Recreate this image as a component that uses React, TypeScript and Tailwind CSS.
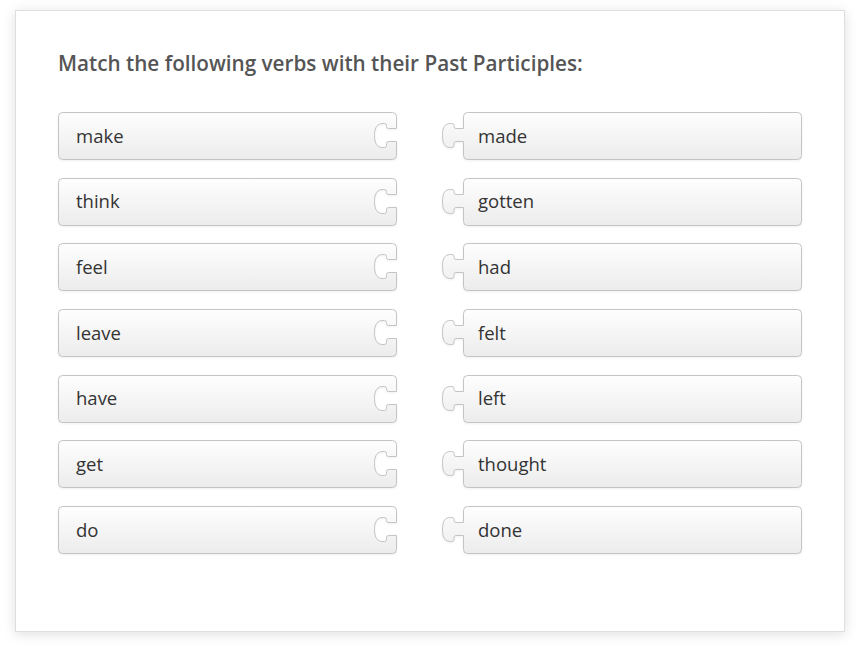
const left = ['make', 'think', 'feel', 'leave', 'have', 'get', 'do'];
const right = ['made', 'gotten', 'had', 'felt', 'left', 'thought', 'done'];

const socketPath =
  'M 4.5 0.5 H 334.5 Q 338.5 0.5 338.5 4.5 V 16.5 H 330.5 Q 328.5 16.5 328.5 14.5 V 13.5 Q 328.5 11.5 326.5 11.5 H 325 C 319.5 11.5 316.5 15 316.5 23.5 C 316.5 32 319.5 35.5 325 35.5 H 326.5 Q 328.5 35.5 328.5 33.5 V 31.5 Q 328.5 29.5 330.5 29.5 H 338.5 V 43.5 Q 338.5 47.5 334.5 47.5 H 4.5 Q 0.5 47.5 0.5 43.5 V 4.5 Q 0.5 0.5 4.5 0.5 Z';

const tabPath =
  'M 25.5 0.5 H 355.5 Q 359.5 0.5 359.5 4.5 V 43.5 Q 359.5 47.5 355.5 47.5 H 25.5 Q 21.5 47.5 21.5 43.5 V 29.5 H 14 Q 12 29.5 12 31.5 V 33.5 Q 12 35.5 10 35.5 H 8.5 C 3 35.5 0.5 32 0.5 23.5 C 0.5 15 3 11.5 8.5 11.5 H 10 Q 12 11.5 12 13.5 V 14.5 Q 12 16.5 14 16.5 H 21.5 V 4.5 Q 21.5 0.5 25.5 0.5 Z';

function Piece({ label, side }: { label: string; side: 'left' | 'right' }) {
  const w = side === 'left' ? 339 : 360;
  return (
    <div
      className={`relative h-[48px] flex items-center ${
        side === 'left' ? 'w-[339px] pl-[18px]' : 'w-[360px] pl-[36px]'
      }`}
    >
      <svg
        className="absolute inset-0 drop-shadow-[0_1px_1px_rgba(0,0,0,0.06)]"
        width={w}
        height={48}
        viewBox={`0 0 ${w} 48`}
      >
        <defs>
          <linearGradient id="tileFill" x1="0" y1="0" x2="0" y2="1">
            <stop offset="0" stopColor="#fefefe" />
            <stop offset="1" stopColor="#ececec" />
          </linearGradient>
        </defs>
        <path d={side === 'left' ? socketPath : tabPath} fill="url(#tileFill)" stroke="#c4c4c4" strokeWidth="1" />
      </svg>
      <span className="relative text-[18.5px] text-[#333] leading-none">{label}</span>
    </div>
  );
}

export default function App() {
  return (
    <div className="w-[861px] h-[653px] bg-white pt-[10px] pl-[15px]" style={{ fontFamily: '"Open Sans", sans-serif' }}>
      <div className="w-[830px] h-[622px] bg-white border border-[#dedede] shadow-[0_2px_12px_rgba(0,0,0,0.13)] pt-[38px] pl-[42px]">
        <h1 className="text-[20.7px] font-semibold text-[#555] leading-[28px]">
          Match the following verbs with their Past Participles:
        </h1>
        <div className="flex gap-[45px] mt-[35px]">
          <div className="flex flex-col gap-[17.67px]">
            {left.map((w) => (
              <Piece key={w} label={w} side="left" />
            ))}
          </div>
          <div className="flex flex-col gap-[17.67px]">
            {right.map((w) => (
              <Piece key={w} label={w} side="right" />
            ))}
          </div>
        </div>
      </div>
    </div>
  );
}
